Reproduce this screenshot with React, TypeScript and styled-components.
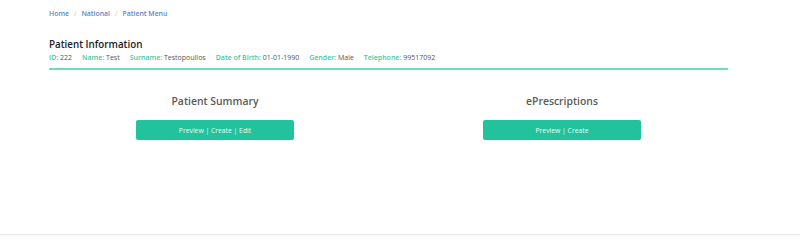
import React from 'react';
import styled, { createGlobalStyle } from 'styled-components';

const GlobalStyle = createGlobalStyle`
  html, body {
    margin: 0;
    padding: 0;
    background: #ffffff;
    font-family: "Open Sans", "Noto Sans", "Liberation Sans", sans-serif;
  }
`;

const Page = styled.div`
  display: flex;
  flex-direction: column;
  height: 240px;
  box-sizing: border-box;
`;

const Main = styled.main`
  flex: 1;
  padding: 0 72px 0 49px;
`;

const Footer = styled.footer`
  height: 5px;
  border-top: 1px solid #e8e8e8;
  background: #fcfcfc;
`;

const Breadcrumb = styled.nav`
  display: flex;
  align-items: center;
  height: 26px;
  font-size: 6.9px;
  font-weight: 600;
`;

const Crumb = styled.a`
  color: #5a88c4;
  text-decoration: none;
`;

const Sep = styled.span`
  color: #c5c5c5;
  padding: 0 5px;
  font-weight: 400;
`;

const InfoBlock = styled.section`
  margin-top: 12px;
  padding-bottom: 4px;
  border-bottom: 2px solid #6fdcbb;
`;

const Title = styled.h2`
  margin: 0;
  font-size: 9.8px;
  font-weight: 600;
  color: #222;
  line-height: 14px;
`;

const Details = styled.div`
  display: flex;
  gap: 10px;
  font-size: 7px;
  line-height: 12px;
  color: #555;
`;

const Field = styled.span`
  white-space: nowrap;
`;

const Label = styled.span`
  color: #45c9a3;
  font-weight: 600;
`;

const Row = styled.div`
  display: grid;
  grid-template-columns: 1fr 1fr;
  margin: 0 -7.5px;
  padding-top: 23px;
`;

const Col = styled.div`
  display: flex;
  flex-direction: column;
  align-items: center;
  padding: 0 7.5px;
`;

const SectionTitle = styled.h3`
  margin: 0;
  font-size: 10.4px;
  font-weight: 600;
  color: #5a5a5a;
  line-height: 16px;
`;

const ActionButton = styled.button`
  margin-top: 11px;
  width: 158px;
  height: 20px;
  border: none;
  border-radius: 2px;
  background: #22c29d;
  color: #eafaf5;
  font-family: inherit;
  font-size: 6.8px;
  cursor: pointer;
`;

const fields: [string, string][] = [
  ['ID', '222'],
  ['Name', 'Test'],
  ['Surname', 'Testopoullos'],
  ['Date of Birth', '01-01-1990'],
  ['Gender', 'Male'],
  ['Telephone', '99517092'],
];

export default function App() {
  return (
    <>
      <GlobalStyle />
      <Page>
        <Main>
          <Breadcrumb>
            <Crumb href="#">Home</Crumb>
            <Sep>/</Sep>
            <Crumb href="#">National</Crumb>
            <Sep>/</Sep>
            <Crumb href="#">Patient Menu</Crumb>
          </Breadcrumb>
          <InfoBlock>
            <Title>Patient Information</Title>
            <Details>
              {fields.map(([k, v]) => (
                <Field key={k}>
                  <Label>{k}:</Label> {v}
                </Field>
              ))}
            </Details>
          </InfoBlock>
          <Row>
            <Col>
              <SectionTitle>Patient Summary</SectionTitle>
              <ActionButton>Preview | Create | Edit</ActionButton>
            </Col>
            <Col>
              <SectionTitle>ePrescriptions</SectionTitle>
              <ActionButton>Preview | Create</ActionButton>
            </Col>
          </Row>
        </Main>
        <Footer />
      </Page>
    </>
  );
}
